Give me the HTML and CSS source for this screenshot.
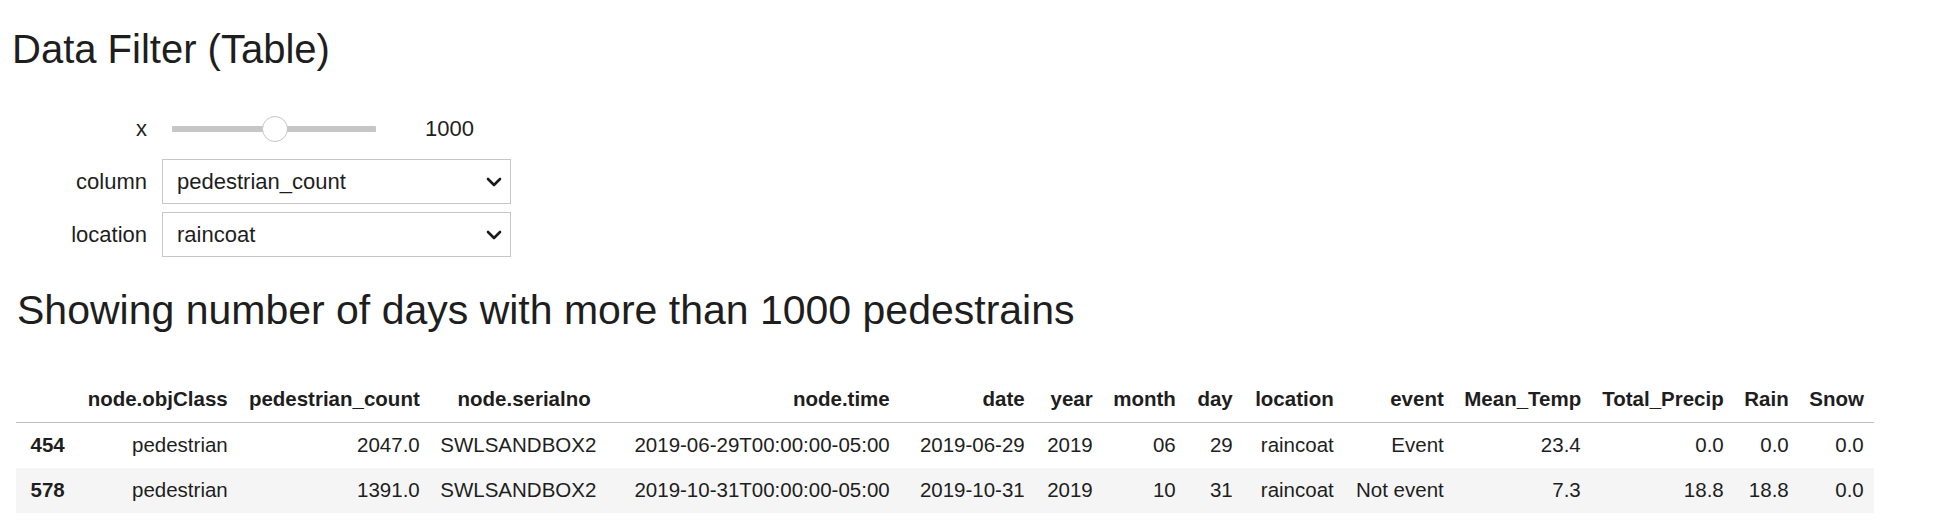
FILE: index.html
```html
<!DOCTYPE html>
<html>
<head>
<meta charset="utf-8">
<link rel="stylesheet" href="styles.css">
</head>
<body>
<h1 class="title">Data Filter (Table)</h1>
<div class="widgets">
  <div class="wrow">
    <span class="wlabel">x</span>
    <div class="slider">
      <div class="track"></div>
      <div class="knob"></div>
    </div>
    <span class="readout">1000</span>
  </div>
  <div class="wrow">
    <span class="wlabel">column</span>
    <div class="select">
      <span class="seltext">pedestrian_count</span>
      <svg class="chev" width="16" height="10" viewBox="0 0 16 10"><path d="M2 2 L8 8 L14 2" fill="none" stroke="#1a1a1a" stroke-width="2.6" stroke-linecap="round" stroke-linejoin="round"/></svg>
    </div>
  </div>
  <div class="wrow">
    <span class="wlabel">location</span>
    <div class="select">
      <span class="seltext">raincoat</span>
      <svg class="chev" width="16" height="10" viewBox="0 0 16 10"><path d="M2 2 L8 8 L14 2" fill="none" stroke="#1a1a1a" stroke-width="2.6" stroke-linecap="round" stroke-linejoin="round"/></svg>
    </div>
  </div>
</div>
<div class="output">
  <h2 class="subtitle">Showing number of days with more than 1000 pedestrains</h2>
  <table class="df">
    <colgroup>
      <col class="c-idx"><col class="c-obj"><col class="c-ped"><col class="c-ser"><col class="c-time"><col class="c-date"><col class="c-year"><col class="c-month"><col class="c-day"><col class="c-loc"><col class="c-event"><col class="c-mean"><col class="c-tot"><col class="c-rain"><col class="c-snow">
    </colgroup>
    <thead>
      <tr>
        <th></th><th>node.objClass</th><th>pedestrian_count</th><th>node.serialno</th><th>node.time</th><th>date</th><th>year</th><th>month</th><th>day</th><th>location</th><th>event</th><th>Mean_Temp</th><th>Total_Precip</th><th>Rain</th><th>Snow</th>
      </tr>
    </thead>
    <tbody>
      <tr>
        <th>454</th><td>pedestrian</td><td>2047.0</td><td>SWLSANDBOX2</td><td>2019-06-29T00:00:00-05:00</td><td>2019-06-29</td><td>2019</td><td>06</td><td>29</td><td>raincoat</td><td>Event</td><td>23.4</td><td>0.0</td><td>0.0</td><td>0.0</td>
      </tr>
      <tr>
        <th>578</th><td>pedestrian</td><td>1391.0</td><td>SWLSANDBOX2</td><td>2019-10-31T00:00:00-05:00</td><td>2019-10-31</td><td>2019</td><td>10</td><td>31</td><td>raincoat</td><td>Not event</td><td>7.3</td><td>18.8</td><td>18.8</td><td>0.0</td>
      </tr>
    </tbody>
  </table>
</div>
</body>
</html>
```

FILE: styles.css
```css
html, body {
  margin: 0;
  padding: 0;
  background: #ffffff;
}
body {
  font-family: "Liberation Sans", Arial, sans-serif;
  color: #1e1e1e;
  width: 1950px;
}
.title {
  margin: 27px 0 0 12px;
  font-size: 40px;
  line-height: 45px;
  font-weight: normal;
}
.widgets {
  margin-top: 34px;
  display: flex;
  flex-direction: column;
  gap: 8px;
}
.wrow {
  display: flex;
  align-items: center;
  height: 45px;
}
.wlabel {
  width: 135px;
  margin-left: 12px;
  margin-right: 15px;
  text-align: right;
  font-size: 22px;
}
.slider {
  position: relative;
  width: 224px;
  padding: 0 10px;
  box-sizing: border-box;
  height: 26px;
  display: flex;
  align-items: center;
}
.track {
  width: 100%;
  height: 6px;
  background: #c6c6c6;
  border-radius: 1px;
}
.knob {
  position: absolute;
  left: 100px;
  top: 0;
  width: 24px;
  height: 24px;
  border-radius: 50%;
  background: #ffffff;
  border: 1px solid #c6c6c6;
}
.readout {
  margin-left: 39px;
  font-size: 22px;
}
.select {
  width: 349px;
  height: 45px;
  box-sizing: border-box;
  border: 1px solid #c6c6c6;
  display: flex;
  align-items: center;
  justify-content: space-between;
  padding: 1px 8px 0 14px;
}
.seltext {
  font-size: 22px;
}
.chev {
  display: block;
}
.output {
  padding-left: 16px;
}
.subtitle {
  margin: 30px 0 0 1px;
  font-size: 41px;
  line-height: 47px;
  font-weight: normal;
}
.df {
  margin-top: 43px;
  border-collapse: collapse;
  border-spacing: 0;
  table-layout: fixed;
  width: 1858px;
  font-size: 20.5px;
  line-height: 24.5px;
}
.df th, .df td {
  padding: 10.25px;
  text-align: right;
  white-space: nowrap;
  vertical-align: middle;
}
.df th {
  font-weight: bold;
}
.df thead {
  border-bottom: 1px solid #bdbdbd;
}
.df tbody tr:nth-child(even) {
  background: #f5f5f5;
}
.c-idx { width: 59px; }
.c-obj { width: 163px; }
.c-ped { width: 192px; }
.c-ser { width: 171px; }
.c-time { width: 299px; }
.c-date { width: 135px; }
.c-year { width: 68px; }
.c-month { width: 83px; }
.c-day { width: 57px; }
.c-loc { width: 101px; }
.c-event { width: 110px; }
.c-mean { width: 137px; }
.c-tot { width: 143px; }
.c-rain { width: 65px; }
.c-snow { width: 75px; }
```
